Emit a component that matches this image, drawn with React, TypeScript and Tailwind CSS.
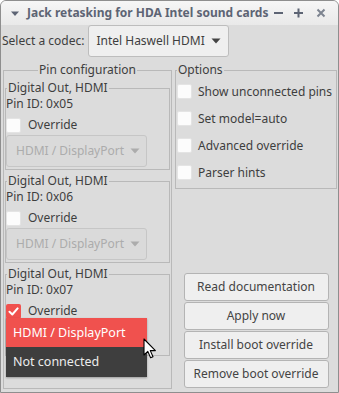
import React from "react";

function Check({ checked = false }: { checked?: boolean }) {
  if (checked) {
    return (
      <span className="w-[15px] h-[15px] rounded-[2px] bg-[#f0514e] flex items-center justify-center shrink-0">
        <svg width="11" height="11" viewBox="0 0 11 11">
          <path d="M1.5 5.8 L4.3 8.5 L9.6 2.4" fill="none" stroke="#ffffff" strokeWidth="2" strokeLinecap="round" strokeLinejoin="round" />
        </svg>
      </span>
    );
  }
  return <span className="w-[15px] h-[15px] rounded-[2px] bg-[#fcfcfc] border border-[#e4e4e4] shrink-0" />;
}

function Arrow({ color }: { color: string }) {
  return (
    <svg width="10" height="6" viewBox="0 0 10 6" className="shrink-0">
      <path d="M0.5 0.5 L9.5 0.5 L5 5.5 Z" fill={color} />
    </svg>
  );
}

function PinFrame({ id, checked = false, open = false }: { id: string; checked?: boolean; open?: boolean }) {
  return (
    <fieldset className="border border-[#b9b9b9] mx-[1px] px-0 pb-[2px] pt-0 min-w-0">
      <legend className="px-[1px] ml-[1px] leading-[16px] h-[16px]">Digital Out, HDMI</legend>
      <div className="h-[16px] leading-[16px]">Pin ID: {id}</div>
      <div className="h-[22px] pt-[4px] flex items-center gap-[7px]">
        <Check checked={checked} />
        <span>Override</span>
      </div>
      <div className="relative mt-[1px] w-[141px] h-[32px]">
        {open ? (
          <div className="absolute left-0 top-[-3px] w-[141px] flex flex-col shadow-[0_1px_2px_rgba(0,0,0,0.3)] z-10">
            <div className="h-[29px] bg-[#f0514e] text-white flex items-center pl-[7px] text-[12.5px]">HDMI / DisplayPort</div>
            <div className="h-[30px] bg-[#3e3e3e] text-[#ececec] flex items-center pl-[7px] text-[12.5px]">Not connected</div>
          </div>
        ) : (
          <div className="w-full h-full border border-[#c6c6c6] rounded-[3px] bg-[#dadada] flex items-center pl-[9px] gap-[6px] text-[#acacac]">
            <span>HDMI / DisplayPort</span>
            <Arrow color="#acacac" />
          </div>
        )}
      </div>
    </fieldset>
  );
}

function Btn({ children }: { children: React.ReactNode }) {
  return (
    <div className="h-[28px] border border-[#b4b4b4] rounded-[3px] bg-[#efefef] flex items-center justify-center text-[#444]">
      {children}
    </div>
  );
}

export default function App() {
  return (
    <div className="w-[339px] h-[393px] bg-[#dcdcdc] flex flex-col border border-[#8e8e8e] rounded-t-[6px] overflow-hidden relative font-['Noto_Sans',sans-serif] text-[12px] leading-[16px] text-[#3e3e3e]">
      {/* title bar */}
      <div className="h-[24px] shrink-0 flex items-center bg-gradient-to-b from-[#f6f6f6] to-[#e9e9e9] text-[#5d6474]">
        <svg width="8" height="6" viewBox="0 0 8 6" className="ml-[10px] mt-[1px]">
          <path d="M0 0.5 L8 0.5 L4 5 Z" fill="#5d6474" />
        </svg>
        <span className="ml-[8px] font-bold text-[12px]">Jack retasking for HDA Intel sound cards</span>
        <div className="ml-auto mr-[12px] flex items-center">
          <svg width="9" height="10" viewBox="0 0 9 10"><rect x="0" y="4" width="9" height="2" fill="#5d6474" /></svg>
          <svg width="9" height="10" viewBox="0 0 9 10" className="ml-[11px]"><rect x="0" y="4" width="9" height="2" fill="#5d6474" /><rect x="3.5" y="0.5" width="2" height="9" fill="#5d6474" /></svg>
          <svg width="10" height="10" viewBox="0 0 10 10" className="ml-[13px]"><path d="M1.5 1.5 L8.5 8.5 M8.5 1.5 L1.5 8.5" stroke="#7d8490" strokeWidth="2" /></svg>
        </div>
      </div>
      {/* codec row */}
      <div className="h-[32px] shrink-0 flex items-center pl-[1px] gap-[4px]">
        <span>Select a codec:</span>
        <div className="w-[141px] h-[32px] border border-[#bdbdbd] rounded-[3px] bg-[#efefef] flex items-center pl-[7px] gap-[6px] text-[#3e3e3e]">
          <span>Intel Haswell HDMI</span>
          <Arrow color="#444" />
        </div>
      </div>
      {/* main */}
      <div className="flex-1 flex mt-[5px] pl-[2px] pr-[1px] pb-[3px] gap-[3px] min-h-0">
        <fieldset className="w-[169px] border border-[#b9b9b9] px-0 pt-[2px] pb-0 flex flex-col gap-[3px] min-w-0">
          <legend className="mx-auto px-[1px] leading-[16px] h-[16px]">Pin configuration</legend>
          <PinFrame id="0x05" />
          <PinFrame id="0x06" />
          <PinFrame id="0x07" checked open />
        </fieldset>
        <div className="flex-1 flex flex-col">
          <fieldset className="border border-[#b9b9b9] pl-[1px] pr-0 pt-0 pb-[2px] min-w-0">
            <legend className="px-[1px] leading-[16px] h-[16px]">Options</legend>
            {["Show unconnected pins", "Set model=auto", "Advanced override", "Parser hints"].map((t) => (
              <div key={t} className="h-[27px] flex items-center gap-[6px]">
                <Check />
                <span>{t}</span>
              </div>
            ))}
          </fieldset>
          <div className="mt-auto mb-[1px] w-[145px] mx-auto flex flex-col gap-[1px]">
            <Btn>Read documentation</Btn>
            <Btn>Apply now</Btn>
            <Btn>Install boot override</Btn>
            <Btn>Remove boot override</Btn>
          </div>
        </div>
      </div>
      {/* mouse cursor */}
      <svg className="absolute left-[142px] top-[337px] z-20" width="14" height="22" viewBox="0 0 14 22">
        <path d="M1 1 L1 17 L4.8 13.4 L7.6 19.8 L10 18.8 L7.3 12.6 L12.4 12.6 Z" fill="#ffffff" stroke="#000000" strokeWidth="1.1" strokeLinejoin="round" />
      </svg>
    </div>
  );
}
